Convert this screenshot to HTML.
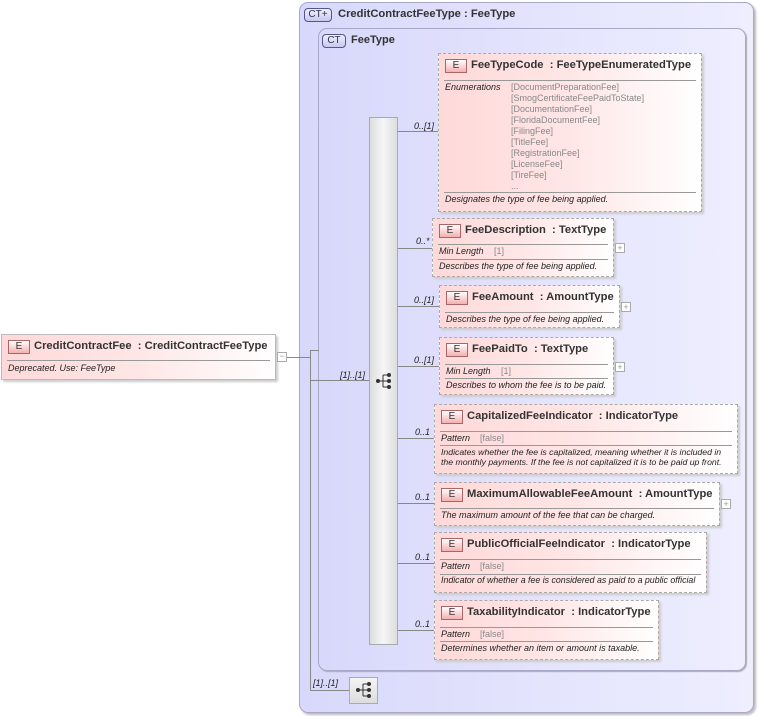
<!DOCTYPE html>
<html><head><meta charset="utf-8"><style>
*{margin:0;padding:0;box-sizing:border-box}
body{width:759px;height:716px;background:#fff;position:relative;overflow:hidden;font-family:"Liberation Sans",Arial,sans-serif;color:#222}
.a{position:absolute}
.ct{position:absolute;border:1px solid #a8a8c8;border-radius:9px;background:linear-gradient(90deg,#d8d8fb,#eeeeff);box-shadow:2px 2px 2px #bbb}
.ctb{position:absolute;border:1px solid #55558a;border-radius:4px;background:linear-gradient(#eef,#c8c8f0);font-size:10px;color:#334;text-align:center;line-height:12px}
.ctt{position:absolute;font-size:11px;font-weight:bold;color:#333}
.box{position:absolute;border:1px dashed #aaa;background:linear-gradient(90deg,#ffd9d9 0%,#ffe6e6 50%,#fff 100%);box-shadow:2px 2px 2px #ccc}
.box.solid{border:1px solid #bbb}
.e{position:absolute;left:6px;top:5px;width:22px;height:14px;border:1px solid #a66;background:linear-gradient(#fff,#f4b0b0);font-size:10px;text-align:center;line-height:12px;color:#333}
.t{position:absolute;left:32px;top:5px;font-size:11.2px;font-weight:bold;white-space:nowrap;color:#333}
.s{position:absolute;left:5px;right:5px;height:1px;background:#999}
.r{position:absolute;left:6px;font-size:9px;font-style:italic;white-space:nowrap;color:#222}
.v{position:absolute;font-size:9px;color:#888;white-space:nowrap}
.l{position:absolute;background:#888}
.lb{position:absolute;font-size:9px;font-style:italic;white-space:nowrap;color:#222}
.pl{position:absolute;width:10px;height:10px;border:1px solid #aaa;background:#fff;font-size:9px;line-height:8px;text-align:center;color:#999}
.seq{position:absolute;border:1px solid #aaa;background:linear-gradient(90deg,#ddd,#f6f6f6 50%,#ddd)}
</style></head><body>

<div class="ct" style="left:299px;top:2px;width:455px;height:711px"></div>
<div class="ctb" style="left:304px;top:8px;width:28px;height:14px">CT+</div>
<div class="ctt" style="left:338px;top:8px;font-size:11.2px">CreditContractFeeType&nbsp;: FeeType</div>

<div class="ct" style="left:318px;top:28px;width:428px;height:643px;box-shadow:1px 1px 1px #aaa"></div>
<div class="ctb" style="left:322px;top:34px;width:24px;height:14px">CT</div>
<div class="ctt" style="left:351px;top:34px">FeeType</div>

<div class="box solid" style="left:1px;top:334px;width:275px;height:46px">
<div class="e">E</div><div class="t">CreditContractFee&nbsp; : CreditContractFeeType</div>
<div class="s" style="top:25px"></div>
<div class="r" style="top:28px">Deprecated. Use: FeeType</div>
</div>
<div class="pl" style="left:277px;top:352px;line-height:6px">−</div>
<div class="l" style="left:287px;top:357px;width:23px;height:1px"></div>
<div class="l" style="left:310px;top:350px;width:1px;height:341px"></div>
<div class="l" style="left:310px;top:350px;width:9px;height:1px"></div>
<div class="l" style="left:310px;top:380px;width:59px;height:1px"></div>
<div class="lb" style="left:340px;top:370px">[1]..[1]</div>
<div class="l" style="left:310px;top:690px;width:39px;height:1px"></div>
<div class="lb" style="left:313px;top:678px">[1]..[1]</div>

<div class="seq" style="left:369px;top:117px;width:29px;height:528px"></div>
<svg class="a" style="left:375px;top:372px" width="18" height="18" viewBox="0 0 18 18"><circle cx="3" cy="9" r="2" fill="#333"/><path d="M3 9H8M8 3V15M8 3H13M8 9H13M8 15H13" stroke="#333" fill="none"/><circle cx="14" cy="3" r="2" fill="#333"/><circle cx="14" cy="9" r="2" fill="#333"/><circle cx="14" cy="15" r="2" fill="#333"/></svg>
<div class="seq" style="left:349px;top:677px;width:29px;height:27px;background:linear-gradient(#f4f4f4,#ddd)"></div>
<svg class="a" style="left:355px;top:681px" width="18" height="18" viewBox="0 0 18 18"><circle cx="3" cy="9" r="2" fill="#333"/><path d="M3 9H8M8 3V15M8 3H13M8 9H13M8 15H13" stroke="#333" fill="none"/><circle cx="14" cy="3" r="2" fill="#333"/><circle cx="14" cy="9" r="2" fill="#333"/><circle cx="14" cy="15" r="2" fill="#333"/></svg>

<div class="l" style="left:398px;top:131px;width:40px;height:1px"></div><div class="lb" style="left:414px;top:121px">0..[1]</div>
<div class="l" style="left:398px;top:248px;width:34px;height:1px"></div><div class="lb" style="left:416px;top:236px">0..*</div>
<div class="l" style="left:398px;top:306px;width:41px;height:1px"></div><div class="lb" style="left:414px;top:295px">0..[1]</div>
<div class="l" style="left:398px;top:366px;width:41px;height:1px"></div><div class="lb" style="left:414px;top:355px">0..[1]</div>
<div class="l" style="left:398px;top:438px;width:36px;height:1px"></div><div class="lb" style="left:415px;top:427px">0..1</div>
<div class="l" style="left:398px;top:503px;width:36px;height:1px"></div><div class="lb" style="left:415px;top:492px">0..1</div>
<div class="l" style="left:398px;top:563px;width:36px;height:1px"></div><div class="lb" style="left:415px;top:552px">0..1</div>
<div class="l" style="left:398px;top:630px;width:36px;height:1px"></div><div class="lb" style="left:415px;top:619px">0..1</div>

<div class="box" style="left:438px;top:53px;width:264px;height:159px">
<div class="e">E</div><div class="t">FeeTypeCode&nbsp; : FeeTypeEnumeratedType</div>
<div class="s" style="top:26px"></div>
<div class="r" style="top:28px">Enumerations</div>
<div class="v" style="left:72px;top:28px;line-height:11px">[DocumentPreparationFee]<br>[SmogCertificateFeePaidToState]<br>[DocumentationFee]<br>[FloridaDocumentFee]<br>[FilingFee]<br>[TitleFee]<br>[RegistrationFee]<br>[LicenseFee]<br>[TireFee]<br>...</div>
<div class="s" style="top:138px"></div>
<div class="r" style="top:140px">Designates the type of fee being applied.</div>
</div>

<div class="box" style="left:432px;top:218px;width:182px;height:59px">
<div class="e">E</div><div class="t">FeeDescription&nbsp; : TextType</div>
<div class="s" style="top:25px"></div>
<div class="r" style="top:27px">Min Length</div><div class="v" style="left:61px;top:27px">[1]</div>
<div class="s" style="top:40px"></div>
<div class="r" style="top:42px">Describes the type of fee being applied.</div>
</div>
<div class="pl" style="left:615px;top:243px">+</div>

<div class="box" style="left:439px;top:285px;width:181px;height:43px">
<div class="e">E</div><div class="t">FeeAmount&nbsp; : AmountType</div>
<div class="s" style="top:26px"></div>
<div class="r" style="top:28px">Describes the type of fee being applied.</div>
</div>
<div class="pl" style="left:621px;top:302px">+</div>

<div class="box" style="left:439px;top:337px;width:175px;height:58px">
<div class="e">E</div><div class="t">FeePaidTo&nbsp; : TextType</div>
<div class="s" style="top:26px"></div>
<div class="r" style="top:28px">Min Length</div><div class="v" style="left:61px;top:28px">[1]</div>
<div class="s" style="top:40px"></div>
<div class="r" style="top:42px">Describes to whom the fee is to be paid.</div>
</div>
<div class="pl" style="left:615px;top:362px">+</div>

<div class="box" style="left:434px;top:404px;width:304px;height:70px">
<div class="e">E</div><div class="t">CapitalizedFeeIndicator&nbsp; : IndicatorType</div>
<div class="s" style="top:26px"></div>
<div class="r" style="top:28px">Pattern</div><div class="v" style="left:45px;top:28px">[false]</div>
<div class="s" style="top:40px"></div>
<div class="r" style="top:42px;line-height:10px;font-size:8.7px">Indicates whether the fee is capitalized, meaning whether it is included in<br>the monthly payments. If the fee is not capitalized it is to be paid up front.</div>
</div>

<div class="box" style="left:434px;top:482px;width:286px;height:44px">
<div class="e">E</div><div class="t">MaximumAllowableFeeAmount&nbsp; : AmountType</div>
<div class="s" style="top:25px"></div>
<div class="r" style="top:27px">The maximum amount of the fee that can be charged.</div>
</div>
<div class="pl" style="left:721px;top:499px">+</div>

<div class="box" style="left:434px;top:532px;width:273px;height:61px">
<div class="e">E</div><div class="t">PublicOfficialFeeIndicator&nbsp; : IndicatorType</div>
<div class="s" style="top:26px"></div>
<div class="r" style="top:28px">Pattern</div><div class="v" style="left:45px;top:28px">[false]</div>
<div class="s" style="top:41px"></div>
<div class="r" style="top:42px;font-size:8.8px">Indicator of whether a fee is considered as paid to a public official</div>
</div>

<div class="box" style="left:434px;top:600px;width:225px;height:60px">
<div class="e">E</div><div class="t">TaxabilityIndicator&nbsp; : IndicatorType</div>
<div class="s" style="top:26px"></div>
<div class="r" style="top:28px">Pattern</div><div class="v" style="left:45px;top:28px">[false]</div>
<div class="s" style="top:40px"></div>
<div class="r" style="top:42px">Determines whether an item or amount is taxable.</div>
</div>

</body></html>
